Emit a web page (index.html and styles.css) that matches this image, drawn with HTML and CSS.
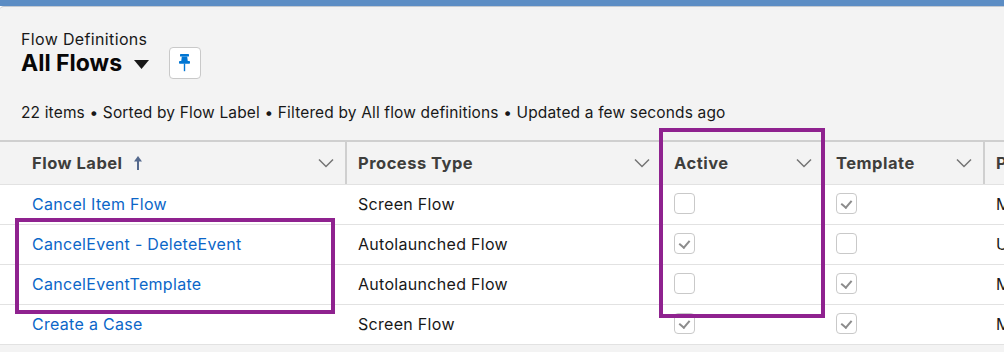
FILE: index.html
```html
<!DOCTYPE html>
<html lang="en">
<head>
<meta charset="utf-8">
<title>Flow Definitions - All Flows</title>
<link rel="stylesheet" href="styles.css">
</head>
<body>
<div class="band"></div>
<div class="panel">
  <div class="head">
    <div class="object">Flow Definitions</div>
    <div class="title-row">
      <h1 class="title">All Flows</h1>
      <svg class="caret" width="15" height="9" viewBox="0 0 15 9"><polygon points="0,0 15,0 7.5,9" fill="#181818"/></svg>
      <button class="pin" type="button" aria-label="Pin list view">
        <svg width="12" height="18" viewBox="0 0 12 18"><rect x="1" y="0" width="9" height="2.6" rx="0.6" fill="#0176d3"/><path d="M2.8 2.4 H8.2 L8.8 7.2 H2.2 Z" fill="#0176d3"/><rect x="0" y="7" width="11" height="2.8" rx="0.8" fill="#0176d3"/><rect x="4.8" y="9.6" width="1.4" height="7.6" fill="#0176d3"/></svg>
      </button>
    </div>
    <div class="status">22 items • Sorted by Flow Label • Filtered by All flow definitions • Updated a few seconds ago</div>
  </div>

  <div class="grid">
    <div class="row hdr">
      <div class="th first"><span class="lbl">Flow Label</span><svg class="sort" width="8" height="14" viewBox="0 0 8 14"><path d="M4 3 V14" stroke="#54698d" stroke-width="2"/><polygon points="0,5.5 4,0 8,5.5" fill="#54698d"/></svg><svg class="chev" width="16" height="10" viewBox="0 0 16 10"><path d="M1 1.5 L8 8.5 L15 1.5" fill="none" stroke="#747474" stroke-width="1.5"/></svg></div>
      <div class="th"><span class="lbl">Process Type</span><svg class="chev" width="16" height="10" viewBox="0 0 16 10"><path d="M1 1.5 L8 8.5 L15 1.5" fill="none" stroke="#747474" stroke-width="1.5"/></svg></div>
      <div class="th"><span class="lbl">Active</span><svg class="chev" width="16" height="10" viewBox="0 0 16 10"><path d="M1 1.5 L8 8.5 L15 1.5" fill="none" stroke="#747474" stroke-width="1.5"/></svg></div>
      <div class="th"><span class="lbl">Template</span><svg class="chev" width="16" height="10" viewBox="0 0 16 10"><path d="M1 1.5 L8 8.5 L15 1.5" fill="none" stroke="#747474" stroke-width="1.5"/></svg></div>
      <div class="th last"><span class="lbl">Process Builder</span></div>
    </div>

    <div class="row">
      <div class="td first"><a href="#">Cancel Item Flow</a></div>
      <div class="td">Screen Flow</div>
      <div class="td"><span class="cb"></span></div>
      <div class="td"><span class="cb on"></span></div>
      <div class="td last">Managed</div>
    </div>
    <div class="row">
      <div class="td first"><a href="#">CancelEvent - DeleteEvent</a></div>
      <div class="td">Autolaunched Flow</div>
      <div class="td"><span class="cb on"></span></div>
      <div class="td"><span class="cb"></span></div>
      <div class="td last">Unmanaged</div>
    </div>
    <div class="row">
      <div class="td first"><a href="#">CancelEventTemplate</a></div>
      <div class="td">Autolaunched Flow</div>
      <div class="td"><span class="cb"></span></div>
      <div class="td"><span class="cb on"></span></div>
      <div class="td last">Managed</div>
    </div>
    <div class="row">
      <div class="td first"><a href="#">Create a Case</a></div>
      <div class="td">Screen Flow</div>
      <div class="td"><span class="cb on"></span></div>
      <div class="td"><span class="cb on"></span></div>
      <div class="td last">Managed</div>
    </div>
  </div>

  <div class="mark mark-rows"></div>
  <div class="mark mark-col"></div>
</div>
</body>
</html>
```

FILE: styles.css
```css
* { box-sizing: border-box; }
html, body {
  margin: 0;
  padding: 0;
  width: 1004px;
  height: 352px;
  overflow: hidden;
  background: #ffffff;
  font-family: "Inter", "Liberation Sans", sans-serif;
  color: #181818;
}
.band {
  height: 6px;
  background: #5c8dc4;
}
.panel {
  position: relative;
  border-top: 1px solid #c3c9d1;
  border-top-left-radius: 4px;
  background: #f3f3f3;
  height: 346px;
}
.head {
  padding: 22px 0 0 21px;
  height: 133px;
}
.object {
  font-size: 16px;
  letter-spacing: 0.35px;
  line-height: 20px;
  color: #181818;
}
.title-row {
  display: flex;
  align-items: center;
  height: 32px;
  margin-top: -2px;
}
.title {
  margin: 0;
  font-size: 23px;
  font-weight: 700;
  line-height: 32px;
  color: #080707;
}
.caret {
  margin-left: 12px;
  margin-top: 2px;
}
.pin {
  margin-left: 20px;
  width: 32px;
  height: 32px;
  padding: 0;
  border: 1px solid #c9c9c9;
  border-radius: 4px;
  background: #ffffff;
  display: flex;
  align-items: center;
  justify-content: center;
}
.status {
  margin-top: 24px;
  font-size: 15.5px;
  letter-spacing: 0.15px;
  line-height: 20px;
  color: #181818;
}
.grid {
  background: #ffffff;
}
.row {
  display: grid;
  grid-template-columns: 347px 316px 162px 160px 1fr;
  height: 40px;
  border-bottom: 1px solid #e2e2e2;
}
.row.hdr {
  height: 45px;
  background: #f3f3f3;
  border-top: 2px solid #cfcfcf;
  border-bottom: 1px solid #e2e2e2;
}
.th {
  position: relative;
  display: flex;
  align-items: center;
  padding-left: 11px;
  padding-right: 11px;
  border-right: 2px solid #cfcfcf;
  font-size: 16.5px;
  letter-spacing: 0.5px;
  font-weight: 700;
  color: #3e3e3c;
  white-space: nowrap;
  overflow: hidden;
}
.th.first { padding-left: 32px; }
.th.last { border-right: none; }
.sort { margin-left: 11px; margin-top: -1px; }
.chev { margin-left: auto; }
.td {
  display: flex;
  align-items: center;
  padding-left: 11px;
  padding-bottom: 2px;
  font-size: 16px;
  letter-spacing: 0.3px;
  color: #181818;
  white-space: nowrap;
  overflow: hidden;
}
.td.first { padding-left: 32px; }
.td a {
  color: #0b66c8;
  text-decoration: none;
}
.cb {
  position: relative;
  width: 21px;
  height: 21px;
  border: 1px solid #c9c9c9;
  border-radius: 4px;
  background: #ffffff;
}
.cb.on::after {
  content: "";
  position: absolute;
  left: 6px;
  top: 4px;
  width: 5px;
  height: 8px;
  border-right: 2px solid #8c8c8c;
  border-bottom: 2px solid #8c8c8c;
  transform: rotate(40deg);
}
.mark {
  position: absolute;
  border: 4px solid #8f228f;
  pointer-events: none;
}
.mark-rows {
  left: 15px;
  top: 211px;
  width: 320px;
  height: 96px;
}
.mark-col {
  left: 659px;
  top: 121px;
  width: 166px;
  height: 190px;
}
```
